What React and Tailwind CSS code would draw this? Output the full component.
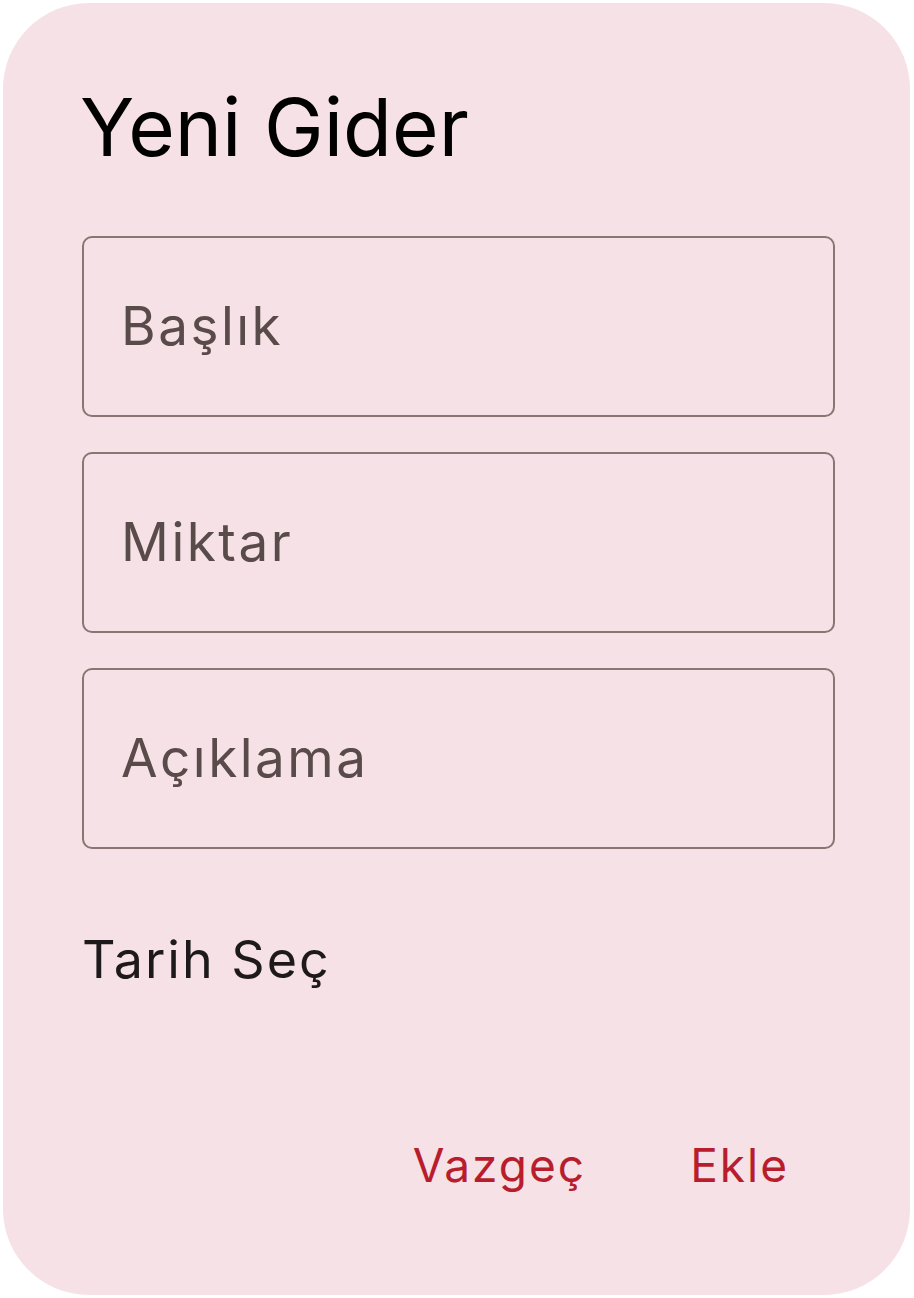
import React from 'react';

const font = { fontFamily: 'Inter, "Noto Sans", sans-serif' };

function Field({ label }) {
  return (
    <div className="flex h-[181px] items-center rounded-[10px] border-[2.5px] border-[#8b7472] px-[37px]">
      <span className="text-[53px] tracking-[2.5px] text-[#5a4b4b]">{label}</span>
    </div>
  );
}

export default function App() {
  return (
    <div className="h-[1298px] w-[914px] bg-white p-[3px]" style={font}>
      <div className="flex h-[1292px] w-[907px] flex-col rounded-[86px] bg-[#f5e1e6] pl-[79px] pr-[75px]">
        <h1 className="mt-[84px] ml-[-2px] text-[80px] leading-none font-normal text-black">Yeni Gider</h1>
        <div className="mt-[69px] flex flex-col gap-[35px]">
          <Field label="Başlık" />
          <Field label="Miktar" />
          <Field label="Açıklama" />
        </div>
        <div className="mt-[85px] text-[52px] leading-none tracking-[2px] text-[#1e1a1b]">Tarih Seç</div>
        <div className="mt-[156px] flex justify-end gap-[104px] pr-[46px] text-[46px] leading-none tracking-[2px] text-[#b81d2e]">
          <button>Vazgeç</button>
          <button>Ekle</button>
        </div>
      </div>
    </div>
  );
}
